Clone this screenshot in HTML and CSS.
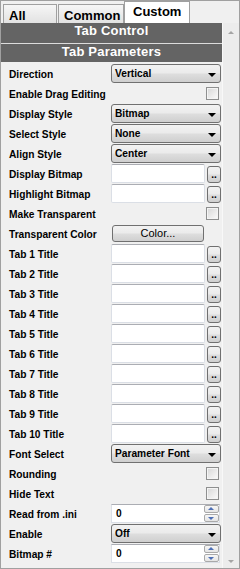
FILE: index.html
```html
<!DOCTYPE html>
<html lang="en">
<head>
    <meta charset="UTF-8">
    <meta name="viewport" content="width=device-width, initial-scale=1.0">
    <title>Tab Parameters</title>
    <link rel="stylesheet" href="styles.css">
</head>
<body>
    <div class="frame">
        <!-- Property tabs -->
        <div class="tabs">
            <div class="tab tab-all">All</div>
            <div class="tab tab-common">Common</div>
            <div class="tab active">Custom</div>
        </div>

        <div class="body">
            <div class="panel">
                <div class="head head-top">Tab Control</div>
                <div class="head">Tab Parameters</div>

                <div class="rows">
                    <div class="row"><span class="label">Direction</span><div class="combo">Vertical<span class="caret"></span></div></div>
                    <div class="row"><span class="label">Enable Drag Editing</span><span class="check"></span></div>
                    <div class="row"><span class="label">Display Style</span><div class="combo">Bitmap<span class="caret"></span></div></div>
                    <div class="row"><span class="label">Select Style</span><div class="combo">None<span class="caret"></span></div></div>
                    <div class="row"><span class="label">Align Style</span><div class="combo">Center<span class="caret"></span></div></div>
                    <div class="row"><span class="label">Display Bitmap</span><div class="field"><span class="input"></span><span class="dots">..</span></div></div>
                    <div class="row"><span class="label">Highlight Bitmap</span><div class="field"><span class="input"></span><span class="dots">..</span></div></div>
                    <div class="row"><span class="label">Make Transparent</span><span class="check"></span></div>
                    <div class="row"><span class="label">Transparent Color</span><span class="color-btn">Color...</span></div>
                    <div class="row"><span class="label">Tab 1 Title</span><div class="field"><span class="input"></span><span class="dots">..</span></div></div>
                    <div class="row"><span class="label">Tab 2 Title</span><div class="field"><span class="input"></span><span class="dots">..</span></div></div>
                    <div class="row"><span class="label">Tab 3 Title</span><div class="field"><span class="input"></span><span class="dots">..</span></div></div>
                    <div class="row"><span class="label">Tab 4 Title</span><div class="field"><span class="input"></span><span class="dots">..</span></div></div>
                    <div class="row"><span class="label">Tab 5 Title</span><div class="field"><span class="input"></span><span class="dots">..</span></div></div>
                    <div class="row"><span class="label">Tab 6 Title</span><div class="field"><span class="input"></span><span class="dots">..</span></div></div>
                    <div class="row"><span class="label">Tab 7 Title</span><div class="field"><span class="input"></span><span class="dots">..</span></div></div>
                    <div class="row"><span class="label">Tab 8 Title</span><div class="field"><span class="input"></span><span class="dots">..</span></div></div>
                    <div class="row"><span class="label">Tab 9 Title</span><div class="field"><span class="input"></span><span class="dots">..</span></div></div>
                    <div class="row"><span class="label">Tab 10 Title</span><div class="field"><span class="input"></span><span class="dots">..</span></div></div>
                    <div class="row"><span class="label">Font Select</span><div class="combo">Parameter Font<span class="caret"></span></div></div>
                    <div class="row"><span class="label">Rounding</span><span class="check"></span></div>
                    <div class="row"><span class="label">Hide Text</span><span class="check"></span></div>
                    <div class="row"><span class="label">Read from .ini</span><div class="spin"><span class="value">0</span><span class="spin-btns"><span class="sb up"></span><span class="sb down"></span></span></div></div>
                    <div class="row"><span class="label">Enable</span><div class="combo">Off<span class="caret"></span></div></div>
                    <div class="row"><span class="label">Bitmap #</span><div class="spin"><span class="value">0</span><span class="spin-btns"><span class="sb up"></span><span class="sb down"></span></span></div></div>
                </div>
            </div>

            <!-- Vertical scrollbar -->
            <div class="scrollbar">
                <span class="arrow arrow-up"></span>
                <span class="arrow arrow-down"></span>
            </div>
        </div>
    </div>
</body>
</html>
```

FILE: styles.css
```css
* {
    box-sizing: border-box;
    margin: 0;
    padding: 0;
}

body {
    background-color: #f0f0f0;
    font-family: "Liberation Sans", Arial, sans-serif;
    font-weight: bold;
    color: #000;
}

.frame {
    width: 240px;
    height: 569px;
    border: 1px solid #a0a0a0;
    background-color: #f0f0f0;
    display: flex;
    flex-direction: column;
    overflow: hidden;
}

/* Tabs */
.tabs {
    display: flex;
    align-items: flex-end;
    height: 22px;
    padding-left: 2px;
    gap: 1px;
}

.tab {
    height: 19px;
    border: 1px solid #a0a0a0;
    border-bottom: none;
    background: linear-gradient(#f6f6f6, #e2e2e2);
    font-size: 13px;
    line-height: 15px;
    padding: 3px 0 0 5px;
}

.tab-all {
    width: 54px;
}

.tab-common {
    width: 66px;
}

.tab.active {
    width: 66px;
    height: 22px;
    margin-left: -1px;
    background: #fff;
    padding: 2px 0 0 8px;
}

.body {
    flex: 1;
    display: flex;
}

.panel {
    width: 221px;
}

/* Section headers */
.head {
    height: 18px;
    background-color: #646464;
    color: #fff;
    text-align: center;
    font-size: 13px;
    line-height: 16px;
    letter-spacing: 0.2px;
}

.head-top {
    height: 21px;
    border-bottom: 1px solid #dcdcdc;
}

.rows {
    padding: 1px 0 0 8px;
}

.row {
    display: flex;
    height: 20px;
}

.label {
    width: 102px;
    font-size: 10.2px;
    line-height: 12px;
    padding-top: 6px;
    white-space: nowrap;
}

/* Dropdown */
.combo {
    position: relative;
    width: 110px;
    height: 19px;
    margin-top: 1px;
    border: 1px solid #707070;
    border-radius: 3px;
    background: linear-gradient(#f2f2f2, #ebebeb 45%, #dddddd 55%, #cfcfcf);
    font-size: 10.2px;
    line-height: 15px;
    padding: 1px 0 0 3px;
}

.caret {
    position: absolute;
    right: 4px;
    top: 8px;
    border-left: 4px solid transparent;
    border-right: 4px solid transparent;
    border-top: 4px solid #000;
}

/* Checkbox */
.check {
    width: 13px;
    height: 13px;
    margin: 4px 0 0 95px;
    border: 1px solid #8e8f8f;
    background: linear-gradient(135deg, #d6d6d6, #fcfcfc);
    box-shadow: inset 0 0 0 1px #f4f4f4;
}

/* Text field with browse button */
.field {
    display: flex;
    gap: 2px;
    margin-top: 1px;
}

.input {
    width: 94px;
    height: 19px;
    background: #fff;
    border: 1px solid #dbdfe6;
    border-top-color: #abadb3;
    border-radius: 2px;
}

.dots {
    width: 14px;
    height: 17px;
    margin-top: 2px;
    border: 1px solid #707070;
    border-radius: 3px;
    background: linear-gradient(#f2f2f2, #ebebeb 45%, #dddddd 55%, #cfcfcf);
    font-size: 10px;
    line-height: 12px;
    padding-top: 2px;
    text-align: center;
}

/* Colour button */
.color-btn {
    width: 92px;
    height: 17px;
    margin: 2px 0 0 1px;
    border: 1px solid #707070;
    border-radius: 3px;
    background: linear-gradient(#f2f2f2, #ebebeb 45%, #dddddd 55%, #cfcfcf);
    font-size: 11px;
    font-weight: normal;
    line-height: 15px;
    text-align: center;
}

/* Spin box */
.spin {
    display: flex;
    width: 109px;
    height: 19px;
    margin-top: 1px;
    background: #fff;
    border: 1px solid #dbdfe6;
    border-top-color: #abadb3;
}

.value {
    flex: 1;
    font-size: 10.2px;
    line-height: 15px;
    padding: 1px 0 0 4px;
}

.spin-btns {
    display: flex;
    flex-direction: column;
    gap: 1px;
    width: 15px;
}

.sb {
    position: relative;
    height: 8px;
    border: 1px solid #a9a9a9;
    border-radius: 2px;
    background: linear-gradient(#f7f7f7, #e4e4e4);
}

.sb::after {
    content: "";
    position: absolute;
    left: 3px;
    top: 1px;
    border-left: 3px solid transparent;
    border-right: 3px solid transparent;
}

.sb.up::after {
    border-bottom: 3px solid #4d6fb5;
}

.sb.down::after {
    top: 2px;
    border-top: 3px solid #4d6fb5;
}

/* Scrollbar */
.scrollbar {
    position: relative;
    width: 17px;
    background: #ececec;
    border-left: 1px solid #f8f8f8;
}

.arrow {
    position: absolute;
    left: 5px;
    border-left: 3px solid transparent;
    border-right: 3px solid transparent;
}

.arrow-up {
    top: 8px;
    border-bottom: 3px solid #a4a4a4;
}

.arrow-down {
    bottom: 5px;
    border-top: 3px solid #a4a4a4;
}
```
